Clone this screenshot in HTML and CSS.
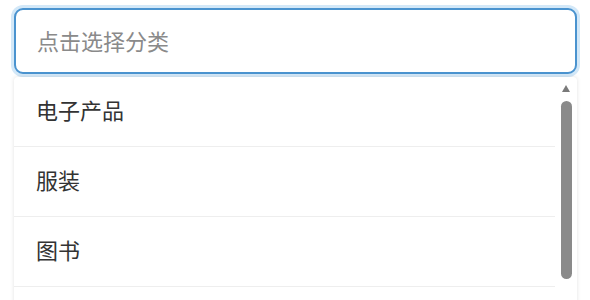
FILE: index.html
```html
<!DOCTYPE html>
<html lang="zh">
<head>
<meta charset="UTF-8" />
<title>选择分类</title>
<link rel="stylesheet" href="styles.css">
</head>
<body>
  <div class="select">
    <input class="select-input" type="text" placeholder="点击选择分类" />
    <div class="dropdown">
      <ul class="options">
        <li class="option">电子产品</li>
        <li class="option">服装</li>
        <li class="option">图书</li>
      </ul>
      <div class="scrollbar">
        <span class="scroll-arrow"></span>
        <span class="scroll-thumb"></span>
      </div>
    </div>
  </div>
</body>
</html>
```
FILE: styles.css
```css
* {
  box-sizing: border-box;
}
html, body {
  margin: 0;
  padding: 0;
  height: 100%;
  background: #fff;
  overflow: hidden;
  font-family: "Noto Sans CJK SC", "Noto Sans", sans-serif;
}
.select {
  padding: 8px 13px 0 14px;
}
.select-input {
  display: block;
  width: 100%;
  height: 66px;
  padding: 0 21px 2px;
  border: 2px solid #4a93cf;
  border-radius: 9px;
  box-shadow: 0 0 0 3px #d3e8f8;
  font-family: inherit;
  font-size: 22px;
  color: #333;
  outline: none;
}
.select-input::placeholder {
  color: #8a8a8a;
}
.dropdown {
  margin-top: 3px;
  display: flex;
  height: 240px;
  background: #fff;
  border-radius: 4px 4px 0 0;
  box-shadow: 0 0 4px rgba(0, 0, 0, 0.12);
  overflow: hidden;
}
.options {
  flex: 1;
  margin: 0;
  padding: 0;
  list-style: none;
}
.option {
  height: 70px;
  display: flex;
  align-items: center;
  padding: 0 0 5px 22px;
  border-bottom: 1px solid #eeeeee;
  font-size: 22px;
  color: #333;
}
.scrollbar {
  width: 22px;
  display: flex;
  flex-direction: column;
  align-items: center;
  padding-top: 8px;
}
.scroll-arrow {
  width: 0;
  height: 0;
  border-left: 4.5px solid transparent;
  border-right: 4.5px solid transparent;
  border-bottom: 7px solid #7a7a7a;
}
.scroll-thumb {
  margin-top: 9px;
  width: 11px;
  height: 178px;
  border-radius: 6px;
  background: #8a8a8a;
}
```
